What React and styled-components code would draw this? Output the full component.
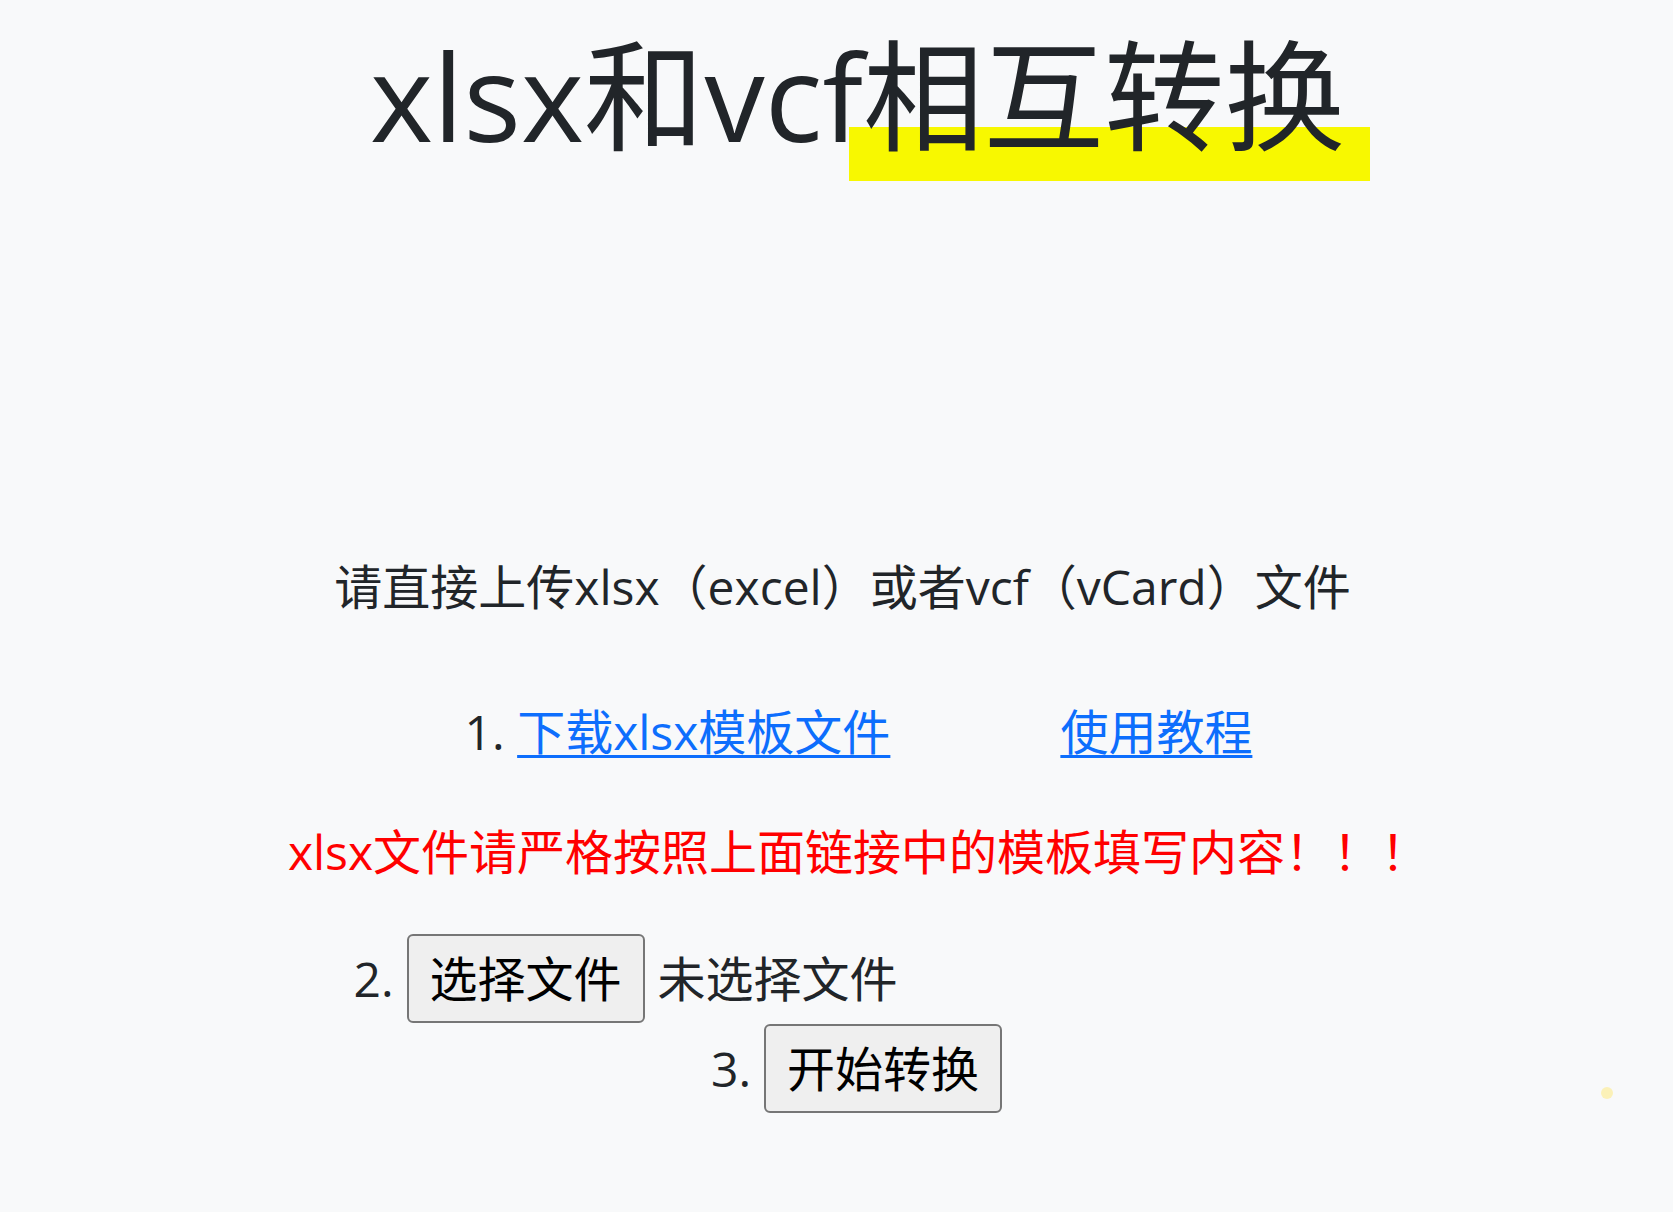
import React from "react";
import styled, { createGlobalStyle } from "styled-components";

const Global = createGlobalStyle`
  html, body { margin: 0; padding: 0; }
  body {
    background: #f8f9fa;
    color: #212529;
    font-family: "Open Sans", "Noto Sans CJK SC", "Noto Sans", sans-serif;
    font-size: 48px;
    line-height: 72px;
  }
`;

const Page = styled.main`
  position: relative;
  min-height: 1212px;
  display: flex;
  flex-direction: column;
  align-items: center;
  padding-top: 23px;
  box-sizing: border-box;
`;

const Title = styled.h1`
  margin: 0;
  font-size: 120.5px;
  line-height: 144px;
  font-weight: 400;
  letter-spacing: 0;
  padding-left: 42px;
`;

const Marker = styled.span`
  position: relative;
  z-index: 0;
  &::before {
    content: "";
    position: absolute;
    z-index: -1;
    left: -14px;
    right: -25px;
    top: 114px;
    height: 54px;
    background: #f8f800;
  }
`;

const Line = styled.p`
  margin: ${(p) => p.$top}px 0 0;
  text-align: center;
  color: ${(p) => p.$color || "#212529"};
  padding-left: ${(p) => p.$shift || 0}px;
`;

const Link = styled.a`
  color: #0d6efd;
  text-decoration: underline;
  text-decoration-thickness: 3px;
  text-underline-offset: 5px;
  margin-left: ${(p) => p.$gap || 0}px;
  cursor: pointer;
`;

const Step = styled.div`
  display: flex;
  align-items: center;
  gap: 13px;
  margin-top: ${(p) => p.$top}px;
  padding-left: ${(p) => p.$shift || 0}px;
`;

const Button = styled.button`
  font: inherit;
  font-size: 48px;
  line-height: 60px;
  height: 89px;
  padding: 0 21px;
  border: 2px solid #767676;
  border-radius: 6px;
  background: #efefef;
  color: #000;
  cursor: pointer;
`;

const FileName = styled.span`
  width: ${(p) => p.$w}px;
`;

const Dot = styled.span`
  position: absolute;
  left: 1601px;
  top: 1087px;
  width: 12px;
  height: 12px;
  border-radius: 50%;
  background: #fbf1b8;
`;

export default function App() {
  return (
    <>
      <Global />
      <Page>
        <Title>
          xlsx和vcf<Marker>相互转换</Marker>
        </Title>
        <Line $top={384} $shift={12}>
          请直接上传xlsx（excel）或者vcf（vCard）文件
        </Line>
        <Line $top={73} $shift={44}>
          1. <Link>下载xlsx模板文件</Link>
          <Link $gap={170}>使用教程</Link>
        </Line>
        <Line $top={48} $color="#ff0000" $shift={44}>
          xlsx文件请严格按照上面链接中的模板填写内容！！！
        </Line>
        <Step $top={46} $shift={38}>
          <span>2.</span>
          <Button>选择文件</Button>
          <FileName $w={700}>未选择文件</FileName>
        </Step>
        <Step $top={1} $shift={40}>
          <span>3.</span>
          <Button>开始转换</Button>
        </Step>
        <Dot />
      </Page>
    </>
  );
}
